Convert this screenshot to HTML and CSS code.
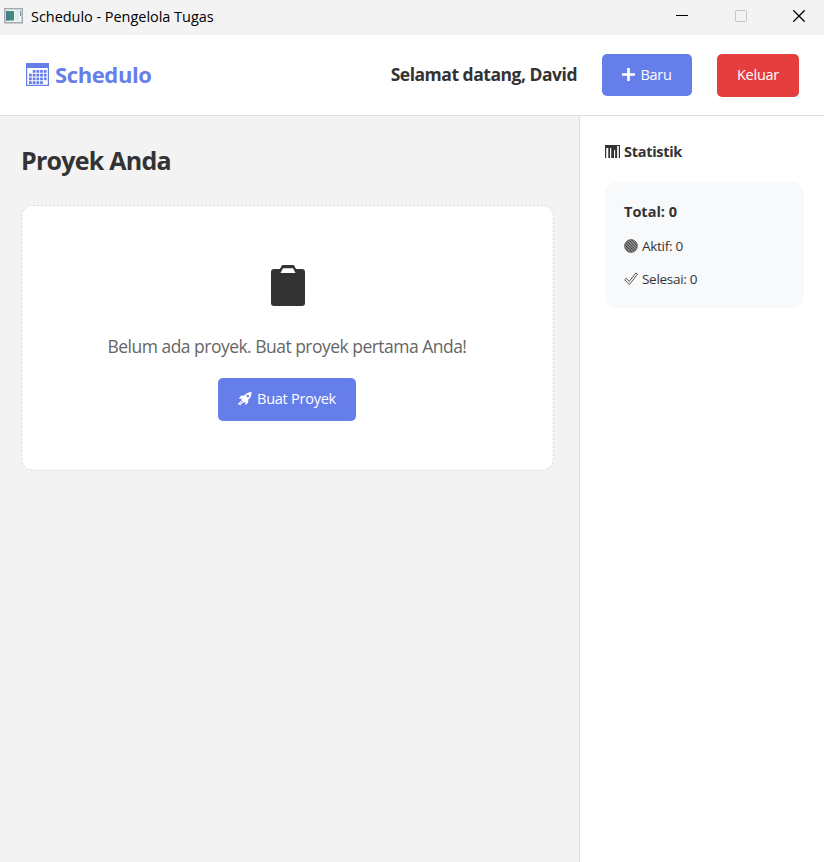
FILE: index.html
```html
<!DOCTYPE html>
<html lang="id">
<head>
<meta charset="utf-8">
<title>Schedulo - Pengelola Tugas</title>
<link rel="stylesheet" href="styles.css">
</head>
<body>
<div class="titlebar">
  <svg class="app-icon" width="20" height="16" viewBox="0 0 20 16"><rect x=".75" y=".75" width="17.500" height="14" fill="#f4f6f6" stroke="#a3abae" stroke-width="1.500"/><rect x="2" y="3" width="8" height="9.500" fill="#3d8c80"/><rect x="2" y="3" width="3" height="9.500" fill="#4c7890"/><rect x="11" y="2" width="4" height="11" fill="#e3eaed"/><path d="M16.500 3v5" stroke="#6a8f95"/></svg>
  <span class="window-title">Schedulo - Pengelola Tugas</span>
  <div class="controls">
    <svg width="12" height="12" viewBox="0 0 12 12"><path d="M0 5.500h12" stroke="#000"/></svg>
    <svg width="12" height="12" viewBox="0 0 12 12"><rect x=".5" y=".5" width="11" height="11" rx="1" fill="none" stroke="#c3c3c3"/></svg>
    <svg width="12" height="12" viewBox="0 0 12 12"><path d="M.3.3l11.400 11.400M11.700.3L.3 11.700" stroke="#000" stroke-width="1.300"/></svg>
  </div>
</div>
<header class="header">
  <div class="brand">
    <svg width="23" height="23" viewBox="0 0 23 23"><path fill="#667eea" fill-rule="evenodd" d="M0 0h23v23H0zM1.200 5v16.800h20.600V5z"/><path d="M6.700 8.300h14M3 12.100h17.700M3 15.900h17.700M3 19.600h14" stroke="#667eea" stroke-width="2.800" stroke-dasharray="2.800 .9"/></svg>
    <span class="brand-name">Schedulo</span>
  </div>
  <span class="welcome">Selamat datang, David</span>
  <button class="btn btn-new"><svg width="13" height="13" viewBox="0 0 13 13"><path d="M6.500 0v13M0 6.500h13" stroke="#fff" stroke-width="2.700"/></svg><span>Baru</span></button>
  <button class="btn btn-exit"><span>Keluar</span></button>
</header>
<div class="content">
  <main class="main">
    <h1 class="heading"><span>Proyek Anda</span></h1>
    <section class="empty">
      <svg class="frame" width="533" height="266"><rect x=".8" y=".5" width="531.400" height="264.500" rx="11" /></svg>
      <svg class="clipboard" width="34" height="42" viewBox="0 0 34 42"><path fill="#333" fill-rule="evenodd" d="M3 4h6l1.500-3Q11 0 12 0h10q1 0 1.500 1L25 4h6q3 0 3 3v31q0 3-3 3H3q-3 0-3-3V7q0-3 3-3zM12 3.200L9.500 8h15L22 3.200z"/></svg>
      <p class="empty-text"><span>Belum ada proyek. Buat proyek pertama Anda!</span></p>
      <button class="btn btn-create"><svg width="14" height="14" viewBox="0 0 14 14"><path fill="#fff" fill-rule="evenodd" d="M13.500 0Q9 .2 6.500 3.500L3 3.800.8 6.800l3-.4-.7 1.800 2.600 2.600 1.800-.7-.4 3 3-2.200.3-3.500Q13.800 5 13.500 0zM9.800 2.700a1.300 1.300 0 1 1-.01 0z"/><path d="M3.300 9.300L.3 12.300M4.600 10.200L1.600 13.200" stroke="#fff" stroke-width="1.200"/></svg><span>Buat Proyek</span></button>
    </section>
  </main>
  <aside class="side">
    <h2 class="stats-title"><svg width="15" height="13" viewBox="0 0 15 13"><path fill="#333" fill-rule="evenodd" d="M0 0h15v13H0zM1.200 3v10h2.100V3zM5 3v10h1.200V3zM9 5v8h1.100V5zM12.100 1v12h1.700V1z"/></svg><span>Statistik</span></h2>
    <div class="card">
      <div class="total"><span>Total: 0</span></div>
      <div class="stat"><svg width="14" height="14" viewBox="0 0 14 14"><defs><pattern id="hatch" width="2" height="2" patternUnits="userSpaceOnUse" patternTransform="rotate(-45)"><rect width="2" height="2" fill="#a0a2a4"/><rect width="1" height="2" fill="#444"/></pattern></defs><circle cx="7" cy="7" r="6.400" fill="url(#hatch)" stroke="#555" stroke-width=".8"/></svg><span>Aktif: 0</span></div>
      <div class="stat"><svg width="14" height="14" viewBox="0 0 14 14"><path d="M.6 7.800l1.700-1.500 2.900 3.200L11.800 1l1.700 1.200L5.400 12.600z" fill="none" stroke="#444" stroke-width=".9"/></svg><span>Selesai: 0</span></div>
    </div>
  </aside>
</div>
</body>
</html>
```
FILE: styles.css
```css
* { box-sizing: border-box; }
body { margin: 0; width: 824px; height: 862px; overflow: hidden; display: flex; flex-direction: column; background: #fff; color: #333; font-family: "Open Sans", "Noto Sans", sans-serif; }
svg { flex: none; display: block; }
span { white-space: nowrap; }
h1, h2, p { margin: 0; }
.titlebar { height: 35px; flex: none; background: #f3f3f3; display: flex; align-items: center; padding: 0 19px 3px 4px; color: #000; }
.window-title { margin-left: 7px; font-size: 14.5px; letter-spacing: -.04px; }
.controls { margin-left: auto; display: flex; gap: 46.5px; }
.header { height: 81px; flex: none; display: flex; align-items: center; padding: 0 25px 0 26px; border-bottom: 1px solid #ddd; }
.brand { display: flex; align-items: center; gap: 6px; color: #667eea; font-size: 22px; font-weight: 700; letter-spacing: -.38px; margin-right: auto; }
.brand svg { position: relative; top: -.5px; }
.brand-name { line-height: 30px; margin-top: -2px; }
.welcome { font-size: 17.5px; letter-spacing: -.48px; font-weight: 700; margin-right: 25px; line-height: 24px; margin-top: -3px; }
.btn { border: 0; padding: 0 0 1px; border-radius: 5px; height: 43px; color: #fff; background: #667eea; font: 14.5px "Open Sans", sans-serif; letter-spacing: -.25px; display: flex; align-items: center; justify-content: center; gap: 5px; }
.btn-new { width: 90px; height: 42px; margin-right: 25px; }
.btn-exit { width: 82px; background: #e53e3e; }
.content { flex: 1; display: flex; }
.main { width: 580px; background: #f3f3f3; border-right: 1px solid #ddd; padding: 24px 25px 0 21px; }
.heading { font-size: 25px; letter-spacing: -.75px; line-height: 40px; margin-bottom: 25px; height: 40px; }
.empty { position: relative; height: 266px; display: flex; flex-direction: column; align-items: center; padding-top: 60px; }
.frame { position: absolute; left: 0; top: 0; fill: #fff; stroke: #d8d8d8; stroke-dasharray: 2 2; }
.clipboard, .empty-text, .btn-create { position: relative; }
.empty-text { margin: 26px 1px 0 0; height: 26px; line-height: 27px; font-size: 17.5px; letter-spacing: -.52px; color: #666; }
.btn-create { width: 138px; margin: 19px 1px 0 0; padding-bottom: 2px; }
.side { width: 244px; padding: 23px 20px 0 25px; }
.stats-title { height: 24px; display: flex; align-items: center; gap: 4px; font-size: 14.5px; letter-spacing: -.3px; }
.card { margin-top: 19px; height: 126px; border-radius: 12px; background: #f8f9fb; padding: 18px 19px; }
.total { height: 24px; line-height: 23px; font-weight: 700; font-size: 14.5px; margin-bottom: 5px; }
.stat { height: 33px; display: flex; align-items: center; gap: 4px; font-size: 13.5px; letter-spacing: -.28px; }
```
